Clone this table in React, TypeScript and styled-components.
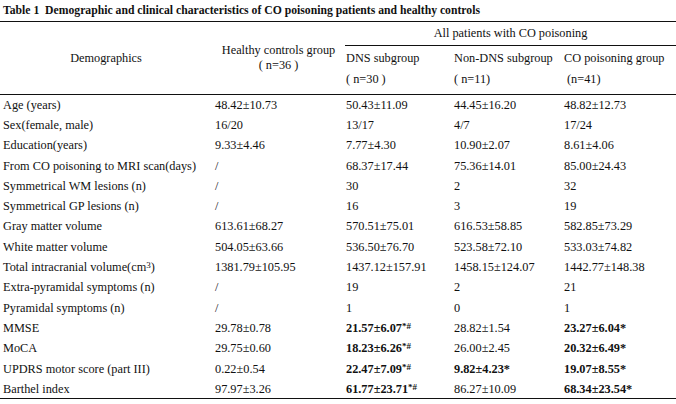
import React from 'react';
import styled, { createGlobalStyle } from 'styled-components';

const GlobalStyle = createGlobalStyle`
  html, body {
    margin: 0;
    padding: 0;
    background: #fff;
  }
  body {
    font-family: "Liberation Serif", "Times New Roman", serif;
    color: #111;
  }
`;

type Row = {
  label: React.ReactNode;
  healthy: string;
  dns: React.ReactNode;
  nonDns: React.ReactNode;
  co: React.ReactNode;
};

const Page = styled.div`
  width: 676px;
  height: 404px;
  overflow: hidden;
  background: #fff;
`;

const Title = styled.div`
  font-weight: bold;
  font-size: 11.7px;
  line-height: 21px;
  padding-left: 3px;
  white-space: pre;
`;

const Table = styled.table`
  width: 676px;
  border-collapse: collapse;
  table-layout: fixed;
  font-size: 12.3px;
  border-top: 1.5px solid #111;
  border-bottom: 1.5px solid #111;
`;

const HeadCell = styled.th<{ $align?: string }>`
  font-weight: normal;
  text-align: ${(p) => p.$align || 'left'};
  vertical-align: middle;
  line-height: 15px;
  padding: 0;
  border-bottom: 1.5px solid #111;
`;

const GroupCell = styled.th`
  font-weight: normal;
  padding: 0;
  height: 24px;
  text-align: center;
  vertical-align: middle;
`;

const GroupRule = styled.div`
  height: 23px;
  line-height: 22px;
  border-bottom: 1px solid #111;
`;

const SubHead = styled.th`
  font-weight: normal;
  text-align: left;
  padding: 0 0 2px 1px;
  height: 46px;
  line-height: 21px;
  vertical-align: middle;
  border-bottom: 1.5px solid #111;
`;

const BodyRow = styled.tr`
  height: 20.3px;
`;

const LabelCell = styled.td`
  padding: 0 0 0 3px;
  line-height: 16px;
  white-space: nowrap;
`;

const ValueCell = styled.td<{ $pad?: number }>`
  padding: 0 0 0 ${(p) => p.$pad ?? 1}px;
  line-height: 16px;
  white-space: nowrap;
`;

const Strong = styled.b`
  font-weight: bold;
`;

const Sup = styled.span`
  font-size: 9px;
  line-height: 0;
  vertical-align: 3px;
`;

const Lead = styled.span`
  padding-left: 3px;
`;

const rows: Row[] = [
  { label: 'Age (years)', healthy: '48.42±10.73', dns: '50.43±11.09', nonDns: '44.45±16.20', co: '48.82±12.73' },
  { label: 'Sex(female, male)', healthy: '16/20', dns: '13/17', nonDns: '4/7', co: '17/24' },
  { label: 'Education(years)', healthy: '9.33±4.46', dns: '7.77±4.30', nonDns: '10.90±2.07', co: '8.61±4.06' },
  { label: 'From CO poisoning to MRI scan(days)', healthy: '/', dns: '68.37±17.44', nonDns: '75.36±14.01', co: '85.00±24.43' },
  { label: 'Symmetrical WM lesions (n)', healthy: '/', dns: '30', nonDns: '2', co: '32' },
  { label: 'Symmetrical GP lesions (n)', healthy: '/', dns: '16', nonDns: '3', co: '19' },
  { label: 'Gray matter volume', healthy: '613.61±68.27', dns: '570.51±75.01', nonDns: '616.53±58.85', co: '582.85±73.29' },
  { label: 'White matter volume', healthy: '504.05±63.66', dns: '536.50±76.70', nonDns: '523.58±72.10', co: '533.03±74.82' },
  {
    label: <>Total intracranial volume(cm<Sup>3</Sup>)</>,
    healthy: '1381.79±105.95', dns: '1437.12±157.91', nonDns: '1458.15±124.07', co: '1442.77±148.38',
  },
  { label: 'Extra-pyramidal symptoms (n)', healthy: '/', dns: '19', nonDns: '2', co: '21' },
  { label: 'Pyramidal symptoms (n)', healthy: '/', dns: '1', nonDns: '0', co: '1' },
  {
    label: 'MMSE', healthy: '29.78±0.78',
    dns: <Strong>21.57±6.07<Sup>*#</Sup></Strong>, nonDns: '28.82±1.54', co: <Strong>23.27±6.04*</Strong>,
  },
  {
    label: 'MoCA', healthy: '29.75±0.60',
    dns: <Strong>18.23±6.26<Sup>*#</Sup></Strong>, nonDns: '26.00±2.45', co: <Strong>20.32±6.49*</Strong>,
  },
  {
    label: 'UPDRS motor score (part III)', healthy: '0.22±0.54',
    dns: <Strong>22.47±7.09<Sup>*#</Sup></Strong>, nonDns: <Strong>9.82±4.23*</Strong>, co: <Strong>19.07±8.55*</Strong>,
  },
  {
    label: 'Barthel index', healthy: '97.97±3.26',
    dns: <Strong>61.77±23.71<Sup>*#</Sup></Strong>, nonDns: '86.27±10.09', co: <Strong>68.34±23.54*</Strong>,
  },
];

const App = () => {
  return (
    <Page>
      <GlobalStyle />
      <Title>{'Table 1  Demographic and clinical characteristics of CO poisoning patients and healthy controls'}</Title>
      <Table>
        <colgroup>
          <col style={{ width: 212 }} />
          <col style={{ width: 133 }} />
          <col style={{ width: 108 }} />
          <col style={{ width: 110 }} />
          <col style={{ width: 113 }} />
        </colgroup>
        <thead>
          <tr>
            <HeadCell rowSpan={2} $align="center">Demographics</HeadCell>
            <HeadCell rowSpan={2} $align="center">
              Healthy controls group
              <br />( n=36 )
            </HeadCell>
            <GroupCell colSpan={3}>
              <GroupRule>All patients with CO poisoning</GroupRule>
            </GroupCell>
          </tr>
          <tr>
            <SubHead>DNS subgroup<br />( n=30 )</SubHead>
            <SubHead>Non-DNS subgroup<br />( n=11)</SubHead>
            <SubHead>CO poisoning group<br /><Lead>(n=41)</Lead></SubHead>
          </tr>
        </thead>
        <tbody>
          {rows.map((r, i) => (
            <BodyRow key={i}>
              <LabelCell>{r.label}</LabelCell>
              <ValueCell $pad={3}>{r.healthy}</ValueCell>
              <ValueCell>{r.dns}</ValueCell>
              <ValueCell>{r.nonDns}</ValueCell>
              <ValueCell>{r.co}</ValueCell>
            </BodyRow>
          ))}
        </tbody>
      </Table>
    </Page>
  );
};

export default App;
